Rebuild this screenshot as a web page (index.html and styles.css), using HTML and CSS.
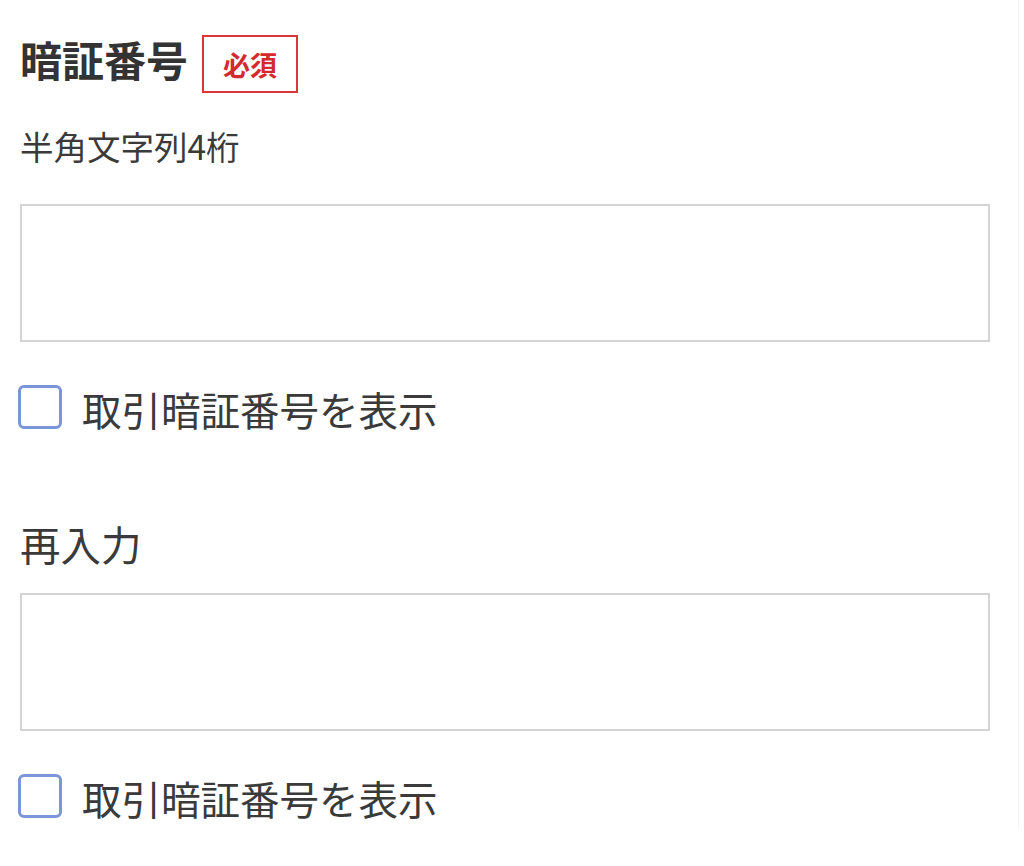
FILE: index.html
```html
<!DOCTYPE html>
<html lang="ja">
<head>
<meta charset="utf-8">
<link rel="stylesheet" href="styles.css">
</head>
<body>
<div class="page">
  <div class="title-row">
    <h1 class="title">暗証番号</h1>
    <span class="badge">必須</span>
  </div>
  <p class="hint">半角文字列4桁</p>
  <div class="field"></div>
  <div class="check-row">
    <span class="checkbox"></span>
    <span class="check-label">取引暗証番号を表示</span>
  </div>
  <h2 class="sub-title">再入力</h2>
  <div class="field field-2"></div>
  <div class="check-row">
    <span class="checkbox"></span>
    <span class="check-label">取引暗証番号を表示</span>
  </div>
</div>
</body>
</html>
```

FILE: styles.css
```css
html, body {
  margin: 0;
  padding: 0;
  background: #ffffff;
}
body {
  font-family: "Noto Sans CJK JP", "Noto Sans", sans-serif;
  color: #333333;
}
.page {
  width: 1019px;
  height: 830px;
  border-right: 1px solid #f6f6f6;
  padding-top: 35px;
  box-sizing: border-box;
}
.title-row {
  display: flex;
  align-items: flex-start;
  padding-left: 20px;
  height: 58px;
}
.title {
  margin: 3px 0 0 0;
  font-size: 42px;
  line-height: 42px;
  font-weight: 700;
  color: #333333;
}
.badge {
  margin-left: 14px;
  width: 96px;
  height: 58px;
  box-sizing: border-box;
  border: 2px solid #d9373a;
  color: #d42a2e;
  font-weight: 700;
  font-size: 27px;
  display: flex;
  align-items: center;
  justify-content: center;
}
.hint {
  margin: 36px 0 0 0;
  padding-left: 20px;
  font-size: 33.5px;
  line-height: 33px;
  color: #3a3a3a;
}
.field {
  margin: 42px 0 0 20px;
  width: 970px;
  height: 138px;
  box-sizing: border-box;
  border: 2px solid #d4d4d4;
  background: #fff;
}
.check-row {
  display: flex;
  align-items: flex-start;
  margin-top: 43px;
  padding-left: 18px;
  height: 44px;
}
.checkbox {
  width: 44px;
  height: 44px;
  box-sizing: border-box;
  border: 3px solid #7c95d8;
  border-radius: 6px;
  background: #fff;
}
.check-label {
  margin: 4px 0 0 20px;
  font-size: 39.5px;
  line-height: 39px;
  color: #3a3a3a;
}
.sub-title {
  margin: 95px 0 0 0;
  padding-left: 20px;
  font-size: 40.5px;
  line-height: 40px;
  font-weight: 400;
  color: #3a3a3a;
}
.field-2 {
  margin-top: 29px;
}
```
